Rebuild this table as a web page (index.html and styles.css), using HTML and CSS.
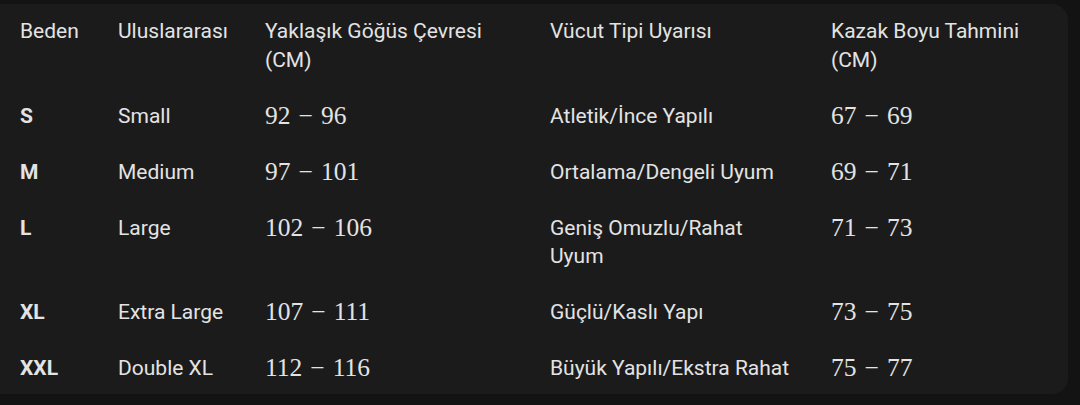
FILE: index.html
```html
<!DOCTYPE html>
<html lang="tr">
<head>
<meta charset="utf-8">
<link rel="stylesheet" href="styles.css">
</head>
<body>
<div class="card">
  <table class="sizes">
    <colgroup>
      <col class="c1"><col class="c2"><col class="c3"><col class="c4"><col class="c5">
    </colgroup>
    <thead>
      <tr>
        <th>Beden</th>
        <th>Uluslararası</th>
        <th>Yaklaşık Göğüs Çevresi (CM)</th>
        <th>Vücut Tipi Uyarısı</th>
        <th>Kazak Boyu Tahmini (CM)</th>
      </tr>
    </thead>
    <tbody>
      <tr><td class="size">S</td><td>Small</td><td class="num">92<span class="op">−</span>96</td><td class="fit">Atletik/İnce Yapılı</td><td class="num">67<span class="op">−</span>69</td></tr>
      <tr><td class="size">M</td><td>Medium</td><td class="num">97<span class="op">−</span>101</td><td class="fit">Ortalama/Dengeli Uyum</td><td class="num">69<span class="op">−</span>71</td></tr>
      <tr><td class="size">L</td><td>Large</td><td class="num">102<span class="op">−</span>106</td><td class="fit">Geniş Omuzlu/Rahat Uyum</td><td class="num">71<span class="op">−</span>73</td></tr>
      <tr><td class="size">XL</td><td>Extra Large</td><td class="num">107<span class="op">−</span>111</td><td class="fit">Güçlü/Kaslı Yapı</td><td class="num">73<span class="op">−</span>75</td></tr>
      <tr><td class="size">XXL</td><td>Double XL</td><td class="num">112<span class="op">−</span>116</td><td class="fit">Büyük Yapılı/Ekstra Rahat</td><td class="num">75<span class="op">−</span>77</td></tr>
    </tbody>
  </table>
</div>
</body>
</html>
```
FILE: styles.css
```css
html, body {
  margin: 0;
  padding: 0;
  background: #131313;
}
body {
  width: 1080px;
  height: 405px;
  overflow: hidden;
  font-family: Roboto, "Noto Sans", sans-serif;
  color: #e3e3e3;
}
.card {
  margin: 4px 12px 0 0;
  width: 1068px;
  height: 390px;
  background: #1b1b1b;
  border-radius: 0 16px 16px 0;
  overflow: hidden;
}
.sizes {
  border-collapse: collapse;
  table-layout: fixed;
  width: 1068px;
}
.c1 { width: 118px; }
.c2 { width: 147px; }
.c3 { width: 285px; }
.c4 { width: 281px; }
.c5 { width: 237px; }
.sizes th,
.sizes td {
  text-align: left;
  vertical-align: top;
  font-size: 21px;
  font-weight: 400;
  line-height: 28.5px;
  padding: 13px 20px 14.5px 0;
}
.sizes th:first-child,
.sizes td:first-child {
  padding-left: 20px;
}
.sizes .size {
  font-weight: 700;
}
.sizes .fit {
  padding-right: 36px;
}
.sizes .num {
  font-family: "Liberation Serif", "DejaVu Serif", serif;
  font-size: 25.5px;
}
.op {
  padding: 0 8px;
}
```
